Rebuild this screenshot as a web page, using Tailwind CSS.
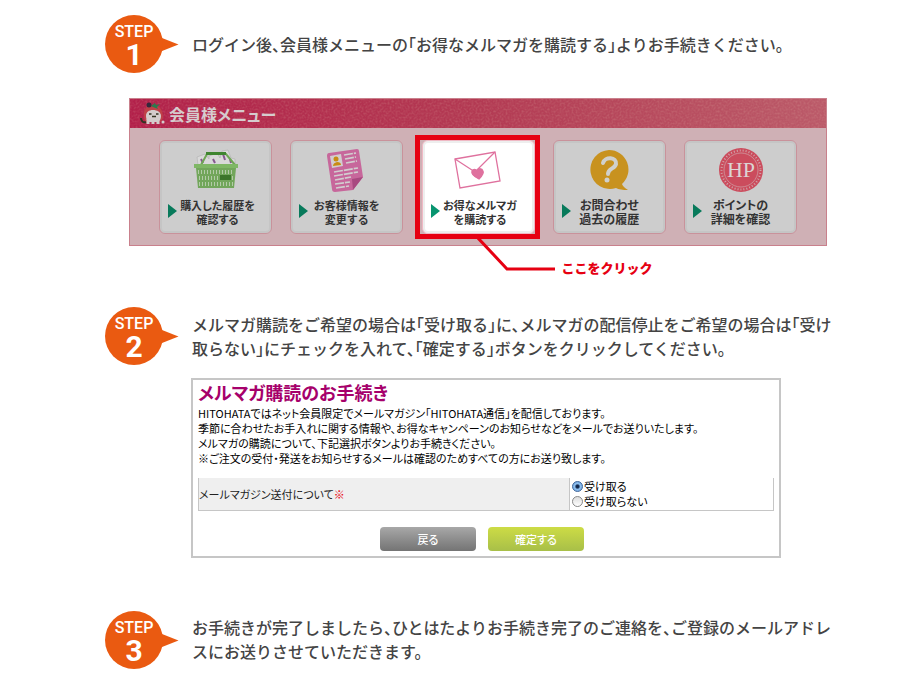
<!DOCTYPE html>
<html lang="ja">
<head>
  <meta charset="UTF-8" />
  <meta name="viewport" content="width=device-width, initial-scale=1.0" />
  <title>メルマガ購読のお手続き</title>
  <script src="https://cdn.jsdelivr.net/npm/@tailwindcss/browser@4"></script>
</head>
<body class="bg-white text-[#444] font-['Noto_Sans_CJK_JP',sans-serif]">
  <main class="pl-[105px] pr-[70px] pt-[15px] pb-6">

    <!-- STEP 1 -->
    <section>
      <div class="flex gap-[13px]">
        <svg class="shrink-0 font-[Roboto,sans-serif]" width="74" height="58" viewBox="0 0 74 58" fill="#fff" text-anchor="middle">
          <path d="M57 23 73.500 29.500 57 36Z" fill="#ea5a11" />
          <circle cx="29" cy="29" r="29" fill="#ea5a11" />
          <text x="29" y="22" font-size="16" font-weight="500">STEP</text>
          <text x="29" y="50" font-size="30" font-weight="700">1</text>
        </svg>
        <p class="pt-[17px] text-base leading-6 font-medium whitespace-nowrap [font-feature-settings:'halt']">ログイン後、会員様メニューの「お得なメルマガを購読する」よりお手続きください。</p>
      </div>

      <nav class="mt-[25px] ml-6 mr-[3px] border border-[#c9808c] bg-[#cfb0b5]">
        <h2 class="relative flex h-[29px] items-center gap-1 bg-linear-to-r from-[#b2204a] via-[#b33a53] to-[#bb5a69] pl-[9px] text-base font-bold text-[#d6ccce] [font-feature-settings:'palt']">
          <svg class="absolute inset-0 h-full w-full opacity-15">
            <filter id="grain"><feTurbulence type="fractalNoise" baseFrequency="0.5" numOctaves="2" /><feColorMatrix values="0 0 0 0 0.85  0 0 0 0 0.65  0 0 0 0 0.5  2.500 0 0 0 -1" /></filter>
            <rect width="100%" height="100%" filter="url(#grain)" />
          </svg>
          <svg class="relative" width="26" height="24" viewBox="0 0 26 24">
            <path d="M5 14C4 7 8 3 14 3s10 4 10 13l-2 4H6Z" fill="#bf4048" />
            <path d="M12 4l4-3 1 2 4-1-3 3 1 2-5-2Z" fill="#2b7a4c" />
            <circle cx="10" cy="3" r="2.500" fill="#33283c" />
            <path d="M7 14c0-4 3-6 7-6s8 2 8 6-2 5-3 6H10c-1-1-3-2-3-6Z" fill="#d4cccc" />
            <path d="M10 12h2.500M17 12h2.500M13 14.500h4" stroke="#332" stroke-width="1.300" />
            <path d="M7 20c-3 1-5-1-5-4" fill="none" stroke="#332" stroke-width="2" />
            <path d="M9 17v5M14 18v4M19 17v5" stroke="#d4cccc" stroke-width="3" />
            <circle cx="24" cy="20" r="1.500" fill="#d4cccc" />
          </svg>
          <span class="relative">会員様メニュー</span>
        </h2>

        <div class="flex justify-between px-[29px] pt-3 pb-[11px] text-center text-[11px] leading-[14px] font-bold text-[#333]">
          <a href="#" class="relative flex h-[94px] w-[113px] flex-col items-center rounded-md border border-[#c9929b] bg-[#cdcdcd] pt-[7px] inset-ring-2 inset-ring-[#c0c0c0]/60">
            <svg width="48" height="44" viewBox="0 0 48 44">
              <path d="m6 17-1-8 8-3 4 5V8l8-3 3 5 2-7 6-1 3 8 4 1v6Z" fill="#d9d9d9" stroke="#b5b5b5" stroke-width=".7" />
              <path d="m9 11 2 4M21 11l2 4M31 6l2 6M38 11l1 4" stroke="#86588f" stroke-width="2" />
              <path d="M9 17 15 6h19l9 11" fill="none" stroke="#6fa655" stroke-width="2" />
              <path d="M14 4h20v3H14Z" fill="#3f8530" />
              <path d="M2 16h44v4H2Z" fill="#7fb765" />
              <path d="M4 20h40l-2 20H6Z" fill="#72a65b" />
              <path d="M6 24h36M7 30h34M7 36h34" stroke="#b3cba8" stroke-width="4" stroke-dasharray="1 2" />
              <path d="M28 27h11v5H28Z" fill="#3c752a" />
            </svg>
            <span class="mt-[6px] pl-1 [font-feature-settings:'palt']">購入した履歴を<br>確認する</span>
            <svg class="absolute left-2 top-[63px]" width="9" height="14" viewBox="0 0 9 14"><path d="M0 0 9 7 0 14Z" fill="#087a5b" /></svg>
          </a>
          <a href="#" class="relative flex h-[94px] w-[113px] flex-col items-center rounded-md border border-[#c9929b] bg-[#cdcdcd] pt-[7px] inset-ring-2 inset-ring-[#c0c0c0]/60">
            <svg width="48" height="44" viewBox="0 0 48 44">
              <path d="M6 5 34 1q2 0 2 2l4 26-10 13-18 2q-3 0-3-3L4 8q0-3 2-3Z" fill="#c7679b" />
              <path d="m40 29-10 13-1-11Z" fill="#a84980" />
              <path d="m7 8 11-2 2 12-11 2Z" fill="#d2cdcf" />
              <circle cx="13" cy="11" r="2.500" fill="#c98b13" /><path d="M10 18q0-3 4-4 4 0 4 3Z" fill="#c98b13" />
              <path d="m21 7 12-2M22 11l11-2M23 15l11-2M11 24l24-4M11 28l24-4M12 32l16-3M12 36l15-2M13 40l13-2" stroke="#d2cdcf" stroke-width="1.700" stroke-dasharray="9 1" />
            </svg>
            <span class="mt-[6px]">お客様情報を<br>変更する</span>
            <svg class="absolute left-2 top-[63px]" width="9" height="14" viewBox="0 0 9 14"><path d="M0 0 9 7 0 14Z" fill="#087a5b" /></svg>
          </a>
          <a href="#" class="relative flex h-[94px] w-[113px] flex-col items-center rounded-md border border-[#efb8c4] bg-white pt-[7px] inset-ring-2 inset-ring-[#eee]">
            <span class="absolute -inset-y-[6px] -left-2 -right-[6px] border-5 border-[#e60012]"></span>
            <svg width="48" height="44" viewBox="0 0 48 44" fill="none" stroke="#df719e" stroke-width="1.300">
              <path d="M1 11 41 4l5 29-40 7Z" />
              <path d="m1 11 20 13L41 4" />
              <path d="M25 31c-6-3-8-5-7-8 1-2 4-2 5 0 1-3 5-3 6 0 1 2-1 5-4 8Z" fill="#df719e" />
            </svg>
            <span class="mt-[6px] pl-1 [font-feature-settings:'palt']">お得なメルマガ<br>を購読する</span>
            <svg class="absolute left-2 top-[63px]" width="9" height="14" viewBox="0 0 9 14"><path d="M0 0 9 7 0 14Z" fill="#089570" /></svg>
            <svg class="absolute left-[54px] top-[97px]" width="80" height="36" viewBox="0 0 80 36" fill="none" stroke="#e60012" stroke-width="3"><path d="m1 0 29 31h48" /></svg>
            <strong class="absolute left-[139px] top-[117px] text-[13px] leading-5 font-black whitespace-nowrap text-[#e60012]">ここをクリック</strong>
          </a>
          <a href="#" class="relative flex h-[94px] w-[113px] flex-col items-center rounded-md border border-[#c9929b] bg-[#cdcdcd] pt-[7px] inset-ring-2 inset-ring-[#c0c0c0]/60">
            <svg width="48" height="44" viewBox="0 0 48 44">
              <path d="M24 2a19.500 19.500 0 1 0 7 38q4 2 12 2-5-3-6-6A19.500 19.500 0 0 0 24 2Z" fill="#c8921f" />
              <path d="M18 15c2-7 14-6 13 1-1 5-8 4-8 10" fill="none" stroke="#d0d0cc" stroke-width="4" stroke-linecap="round" />
              <circle cx="22" cy="32" r="2.500" fill="#d0d0cc" />
            </svg>
            <span class="mt-[6px] text-xs leading-[14px] [font-feature-settings:'palt']">お問合わせ<br>過去の履歴</span>
            <svg class="absolute left-2 top-[63px]" width="9" height="14" viewBox="0 0 9 14"><path d="M0 0 9 7 0 14Z" fill="#087a5b" /></svg>
          </a>
          <a href="#" class="relative flex h-[94px] w-[113px] flex-col items-center rounded-md border border-[#c9929b] bg-[#cdcdcd] pt-[7px] inset-ring-2 inset-ring-[#c0c0c0]/60">
            <svg width="48" height="44" viewBox="0 0 48 44">
              <circle cx="24" cy="22" r="22" fill="#cb4c5d" />
              <circle cx="24" cy="22" r="19.500" fill="none" stroke="#d0a5aa" stroke-width="2" stroke-dasharray="1 2" />
              <circle cx="24" cy="22" r="17" fill="none" stroke="#d0a5aa" stroke-width=".7" />
              <text x="24" y="29" text-anchor="middle" font-family="Liberation Serif, serif" font-size="22" font-weight="400" fill="#dcd4d4">HP</text>
            </svg>
            <span class="mt-[6px] text-xs leading-[14px] [font-feature-settings:'palt']">ポイントの<br>詳細を確認</span>
            <svg class="absolute left-2 top-[63px]" width="9" height="14" viewBox="0 0 9 14"><path d="M0 0 9 7 0 14Z" fill="#087a5b" /></svg>
          </a>
        </div>
      </nav>
    </section>

    <!-- STEP 2 -->
    <section class="mt-[61px]">
      <div class="flex gap-[13px]">
        <svg class="shrink-0 font-[Roboto,sans-serif]" width="74" height="58" viewBox="0 0 74 58" fill="#fff" text-anchor="middle">
          <path d="M57 23 73.500 29.500 57 36Z" fill="#ea5a11" />
          <circle cx="29" cy="29" r="29" fill="#ea5a11" />
          <text x="29" y="22" font-size="16" font-weight="500">STEP</text>
          <text x="29" y="50" font-size="30" font-weight="700">2</text>
        </svg>
        <p class="pt-[5px] text-base leading-6 font-medium whitespace-nowrap [font-feature-settings:'halt']">メルマガ購読をご希望の場合は「受け取る」に、メルマガの配信停止をご希望の場合は「受け<br>取らない」にチェックを入れて、「確定する」ボタンをクリックしてください。</p>
      </div>

      <form class="mt-[13px] ml-[86px] mr-[49px] border-2 border-[#c6c6c6] px-[5px] pb-[5px] text-[11px] text-black [font-feature-settings:'palt']">
        <h2 class="text-lg leading-6 font-bold text-[#a6006b]">メルマガ購読のお手続き</h2>
        <p class="pt-[2px] leading-[15px]">HITOHATAではネット会員限定でメールマガジン「HITOHATA通信」を配信しております。<br>季節に合わせたお手入れに関する情報や、お得なキャンペーンのお知らせなどをメールでお送りいたします。<br>メルマガの購読について、下記選択ボタンよりお手続きください。<br>※ご注文の受付・発送をお知らせするメールは確認のためすべての方にお送り致します。</p>
        <table class="mt-3 w-full border-x border-b border-[#c6c6c6]">
          <tr>
            <th scope="row" class="w-[371px] border-r border-[#c6c6c6] bg-[#efefef] text-left font-normal text-[#222]">メールマガジン送付について<span class="text-red-600">※</span></th>
            <td class="py-px pl-[2px]">
              <label class="flex h-[15px] items-center gap-px"><input type="radio" name="mail" checked class="size-[11px] appearance-none rounded-full border border-[#456a9c] bg-radial from-[#10264a] from-20% via-[#8fc0ef] via-45% to-[#5c93d2]" />受け取る</label>
              <label class="flex h-[15px] items-center gap-px"><input type="radio" name="mail" class="size-[11px] appearance-none rounded-full border border-[#888] bg-linear-to-b from-[#ddd] to-white" />受け取らない</label>
            </td>
          </tr>
        </table>
        <div class="mt-4 flex justify-center gap-3 pr-2 leading-6 font-medium text-white text-shadow-sm">
          <button type="button" class="h-6 w-24 rounded bg-linear-to-b from-[#a8a8a8] to-[#747474]">戻る</button>
          <button type="submit" class="h-6 w-24 rounded bg-linear-to-b from-[#cddc45] to-[#a8bf48]">確定する</button>
        </div>
      </form>
    </section>

    <!-- STEP 3 -->
    <section class="mt-[53px] flex gap-[13px]">
      <svg class="shrink-0 font-[Roboto,sans-serif]" width="74" height="58" viewBox="0 0 74 58" fill="#fff" text-anchor="middle">
        <path d="M57 23 73.500 29.500 57 36Z" fill="#ea5a11" />
        <circle cx="29" cy="29" r="29" fill="#ea5a11" />
        <text x="29" y="22" font-size="16" font-weight="500">STEP</text>
        <text x="29" y="50" font-size="30" font-weight="700">3</text>
      </svg>
      <p class="pt-1 text-base leading-6 font-medium whitespace-nowrap [font-feature-settings:'halt']">お手続きが完了しましたら、ひとはたよりお手続き完了のご連絡を、ご登録のメールアドレ<br>スにお送りさせていただきます。</p>
    </section>
  </main>
</body>
</html>
